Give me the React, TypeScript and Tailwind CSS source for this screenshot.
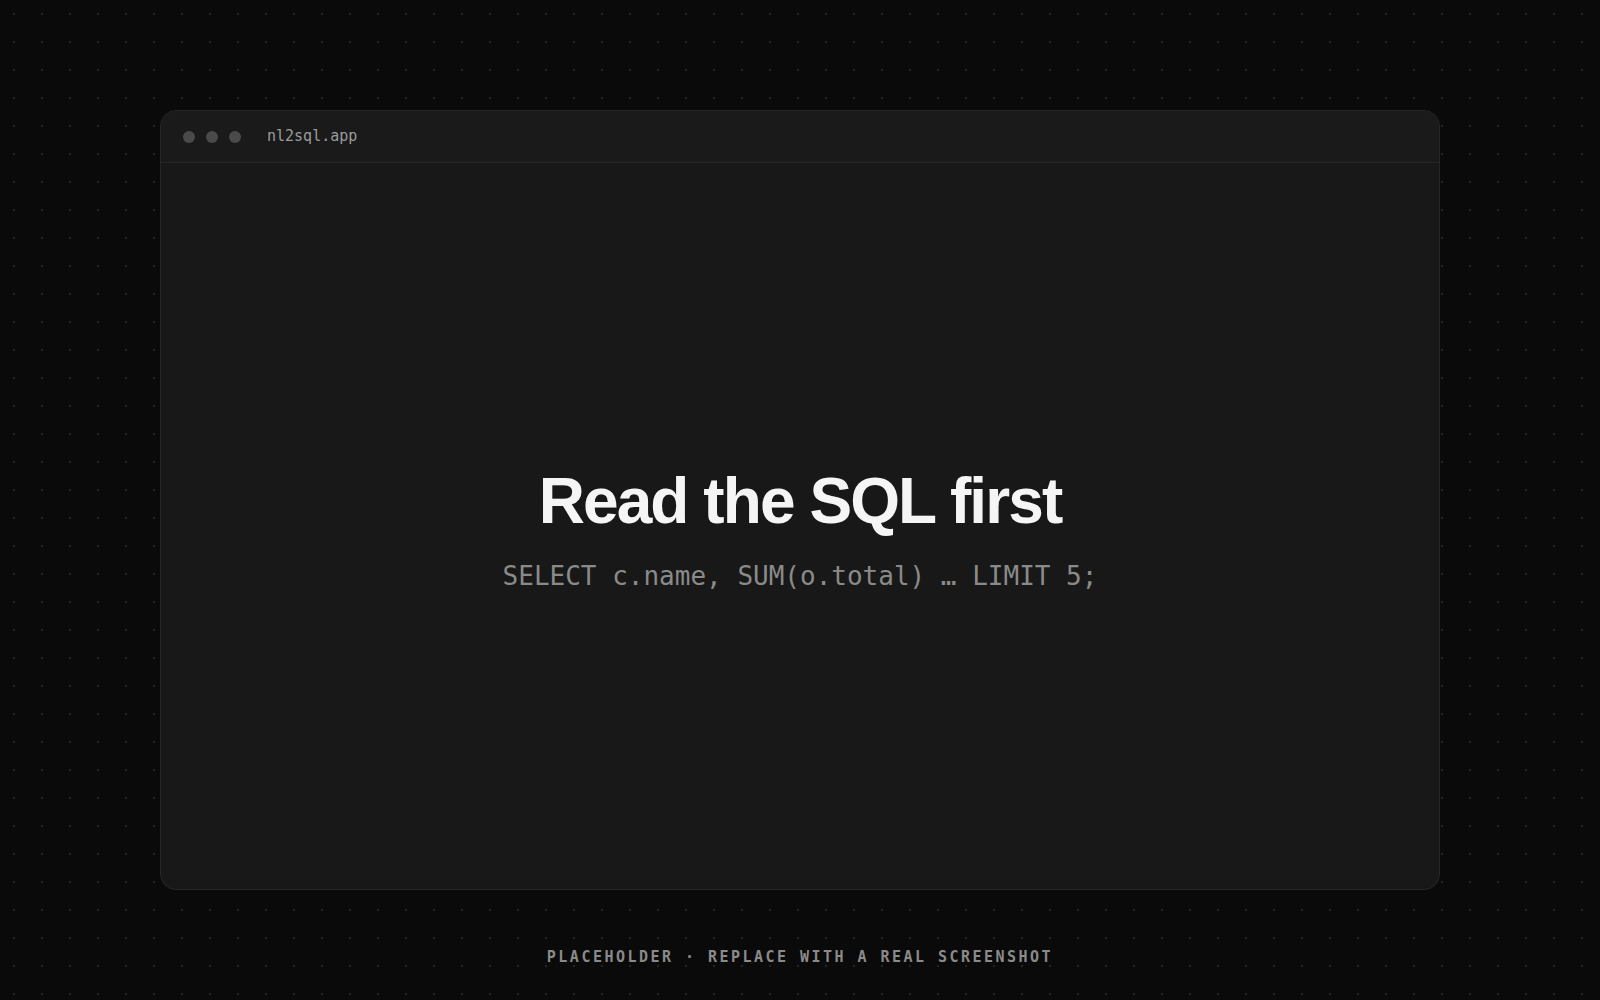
import React from 'react';

const mono = "font-['DejaVu_Sans_Mono',ui-monospace,monospace]";

const TrafficLights: React.FC = () => (
  <div className="flex items-center gap-[11px]">
    <span className="h-3 w-3 rounded-full bg-[#4a4a4a]" />
    <span className="h-3 w-3 rounded-full bg-[#4a4a4a]" />
    <span className="h-3 w-3 rounded-full bg-[#4a4a4a]" />
  </div>
);

const App: React.FC = () => {
  return (
    <div className="flex min-h-screen flex-col items-center bg-[#0a0a0a] bg-[radial-gradient(circle,#262626_1px,transparent_1.2px)] bg-[size:28px_28px] pt-[110px]">
      {/* browser frame */}
      <div className="flex h-[780px] w-[1280px] flex-col overflow-hidden rounded-2xl border border-[#262626] bg-[#181818]">
        <div className="flex h-[52px] items-center gap-[26px] border-b border-[#262626] bg-[#1a1a1a] px-[22px]">
          <TrafficLights />
          <span className={`${mono} text-[15px] text-[#9a9a9a]`}>nl2sql.app</span>
        </div>

        <div className="flex flex-1 flex-col items-center justify-center pt-3">
          <h1 className="font-['Liberation_Sans',Arial,sans-serif] text-[64px] leading-none font-bold tracking-[-0.03em] text-[#f5f5f5]">
            Read the SQL first
          </h1>
          <p className={`${mono} mt-[24px] text-[26px] leading-[1.5] text-[#8a8a8a]`}>
            SELECT c.name, SUM(o.total) … LIMIT 5;
          </p>
        </div>
      </div>

      <p className={`${mono} mt-[57px] text-[15px] leading-5 font-bold tracking-[0.165em] text-[#8a8a8a] uppercase`}>
        Placeholder · Replace with a real screenshot
      </p>
    </div>
  );
};

export default App;
